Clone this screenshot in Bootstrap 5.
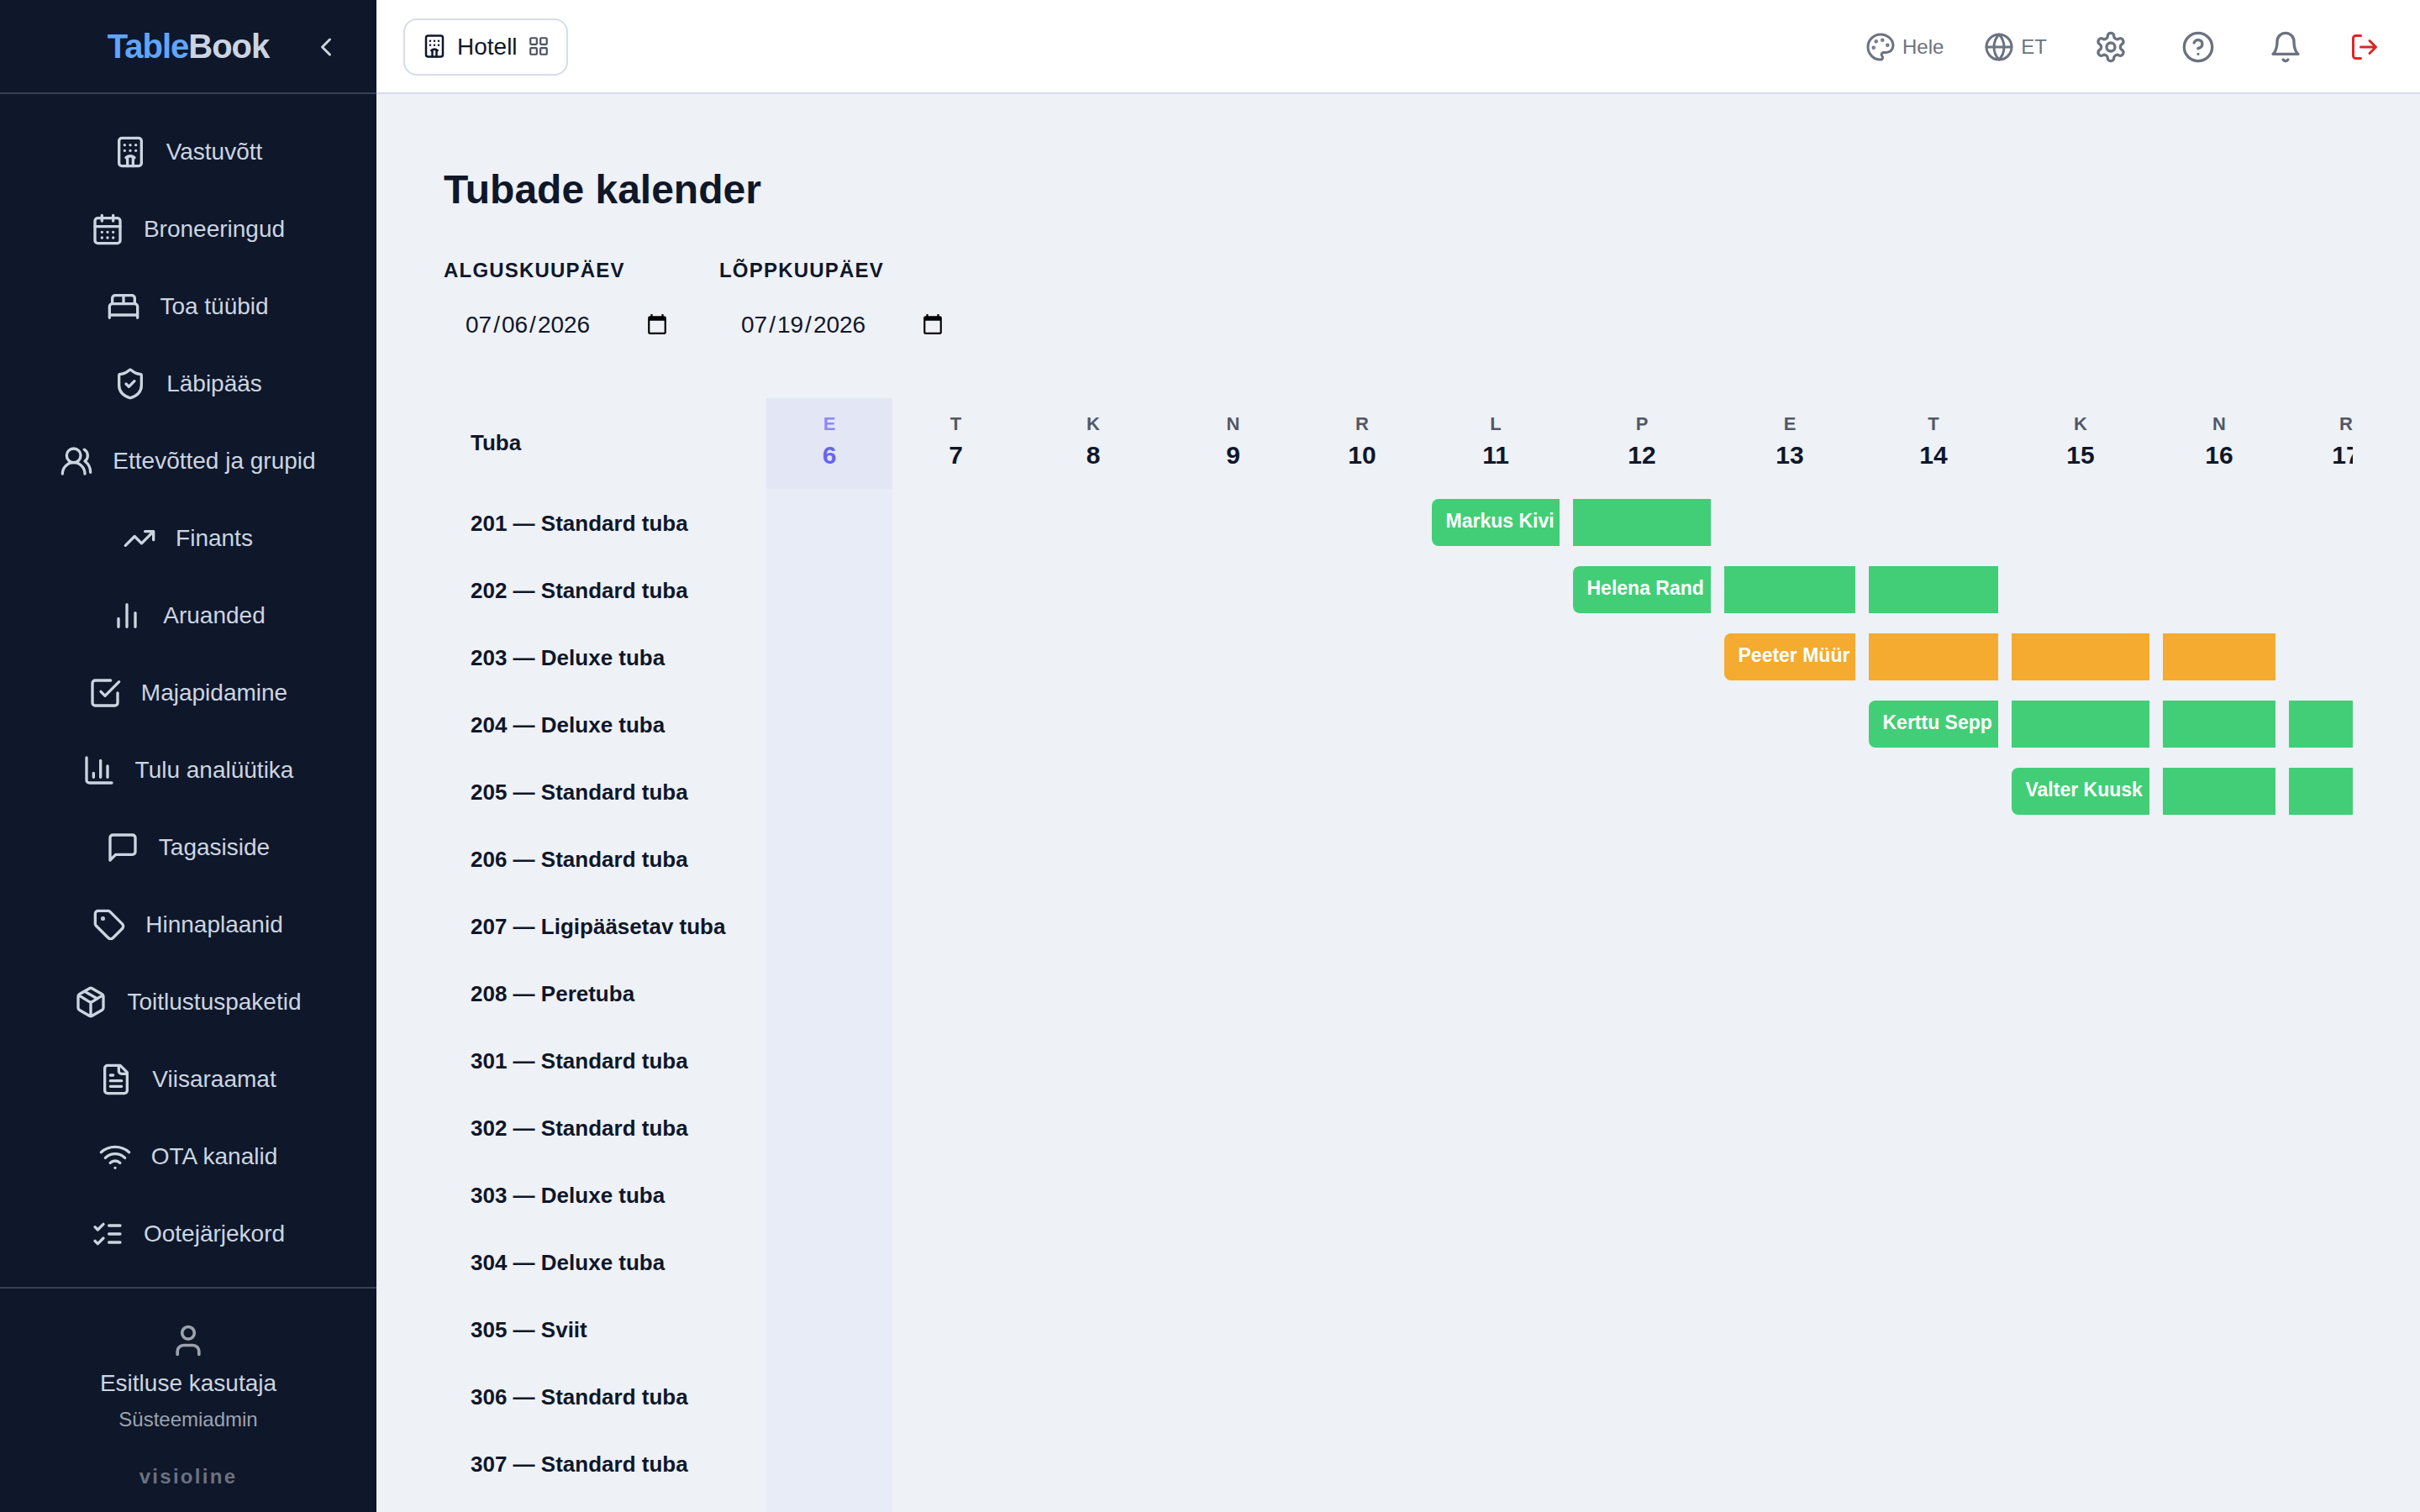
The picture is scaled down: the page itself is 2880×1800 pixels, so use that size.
<!DOCTYPE html>
<html lang="et">
<head>
<meta charset="utf-8">
<meta name="viewport" content="width=device-width, initial-scale=1">
<title>TableBook – Tubade kalender</title>
<link href="https://cdn.jsdelivr.net/npm/bootstrap@5.3.0/dist/css/bootstrap.min.css" rel="stylesheet">
<style>
  body { font-family: "Liberation Sans", Arial, sans-serif; font-size: 28px; line-height: 1.5; color: #0f172a; background: #eef1f6; }
  .app { height: 1800px; }
  .ico { fill: none; stroke: currentColor; stroke-width: 2; stroke-linecap: round; stroke-linejoin: round; flex: none; display: block; }
  .i26 { width: 26px; height: 26px; } .i30 { width: 30px; height: 30px; }
  .i36 { width: 36px; height: 36px; } .i40 { width: 40px; height: 40px; } .i44 { width: 44px; height: 44px; }
  .side { width: 448px; background: #0f172a; color: #cbd5e1; }
  .side-head { height: 112px; border-bottom: 2px solid #334155; display: grid; grid-template-columns: 1fr auto 1fr; align-items: center; }
  .brand { font-size: 40px; font-weight: 700; letter-spacing: -1px; line-height: 1; }
  .brand span { color: #60a5fa; }
  .collapse-btn { justify-self: center; padding: 2px 0 0 8px; color: inherit; }
  .side-nav { padding-top: 23px; }
  .side-nav .nav-link { height: 92px; gap: 23px; padding: 0 1px 0 0; color: #cbd5e1; }
  .side-foot { height: 268px; border-top: 2px solid #334155; padding-top: 40px; }
  .user-name { font-size: 28px; line-height: 42px; margin-top: 8px; }
  .user-role { font-size: 24px; line-height: 36px; color: #9ca3af; margin-top: 4px; }
  .maker { font-size: 24px; line-height: 36px; font-weight: 700; letter-spacing: 2.3px; color: #6b7280; margin-top: 32px; }
  .topbar { height: 112px; border-bottom: 2px solid #d6dce8; background: #fff; padding: 2px 32px 0; }
  .unit-btn { height: 68px; border: 2px solid #d6dce8; border-radius: 16px; gap: 12px; padding: 0 20px; font-size: 28px; color: #0f172a; background: #fff; }
  .unit-btn .ico { margin-bottom: 2px; }
  .tools { gap: 16px; color: #6b7280; font-size: 24px; }
  .tool { padding: 0 16px; gap: 8px; }
  .tool-lg { padding: 0 24px; }
  .page { padding: 81px 80px 0; }
  h1 { font-size: 48px; font-weight: 700; line-height: 66px; margin: 0 0 45px; }
  .fields { gap: 32px; }
  .date-field { width: 296px; }
  .date-field label { font-size: 24px; font-weight: 700; letter-spacing: 1.2px; line-height: 36px; display: block; }
  .date-field input { width: 296px; height: 76px; margin-top: 9px; border: 0; padding: 0 26px 0 24px; font-size: 28px; background: transparent; color: #0f172a; }
  .date-field input::-webkit-datetime-edit-month-field,
  .date-field input::-webkit-datetime-edit-day-field,
  .date-field input::-webkit-datetime-edit-year-field { padding: 0 2px; }
  .cal-wrap { margin-top: 49px; overflow: hidden; }
  .cal { table-layout: fixed; width: 2340px; border-collapse: collapse; }
  .cal th, .cal td { padding: 0; }
  .cal thead th { height: 108px; text-align: center; vertical-align: middle; }
  .cal .room { padding-left: 32px; text-align: left !important; font-size: 26px; font-weight: 700; white-space: nowrap; }
  .cal thead .room { padding-bottom: 2px; }
  .cal tbody tr { height: 80px; }
  .cal tbody td { padding: 12px 8px; }
  .cal tbody .room { padding-top: 14px; }
  .cal .dow { font-size: 22px; line-height: 33px; opacity: .7; display: block; margin-top: -6px; }
  .cal .num { font-size: 30px; line-height: 42px; display: block; }
  .cal thead .today { background: rgba(99,102,241,.08); color: #6366f1; }
  .cal tbody .today { background: #e8ecf6; }
  .stay { height: 56px; line-height: 52px; font-size: 23px; font-weight: 700; color: #fff; white-space: nowrap; overflow: hidden; background: #42ce76; padding-left: 16.500px; }
  .stay.first { border-radius: 8px 0 0 8px; }
  .stay.wait { background: #f4ab2f; }
</style>
</head>
<body>
<svg class="d-none">
  <symbol id="hotel" viewBox="0 0 24 24"><path d="M10 22v-6.57M12 11h.01M12 7h.01M14 15.43V22M15 16a5 5 0 0 0-6 0M16 11h.01M16 7h.01M8 11h.01M8 7h.01"/><rect x="4" y="2" width="16" height="20" rx="2"/></symbol>
  <symbol id="grid" viewBox="0 0 24 24"><rect width="7" height="7" x="3" y="3" rx="1"/><rect width="7" height="7" x="14" y="3" rx="1"/><rect width="7" height="7" x="14" y="14" rx="1"/><rect width="7" height="7" x="3" y="14" rx="1"/></symbol>
  <symbol id="cal" viewBox="0 0 24 24"><path d="M8 2v4M16 2v4M3 10h18M8 14h.01M12 14h.01M16 14h.01M8 18h.01M12 18h.01M16 18h.01"/><rect width="18" height="18" x="3" y="4" rx="2"/></symbol>
  <symbol id="bed" viewBox="0 0 24 24"><path d="M2 20v-8a2 2 0 0 1 2-2h16a2 2 0 0 1 2 2v8M4 10V6a2 2 0 0 1 2-2h12a2 2 0 0 1 2 2v4M12 4v6M2 18h20"/></symbol>
  <symbol id="shield" viewBox="0 0 24 24"><path d="M20 13c0 5-3.5 7.5-7.66 8.95a1 1 0 0 1-.67-.01C7.5 20.5 4 18 4 13V6a1 1 0 0 1 1-1c2 0 4.5-1.2 6.24-2.72a1.17 1.17 0 0 1 1.52 0C14.51 3.81 17 5 19 5a1 1 0 0 1 1 1zM9 12l2 2 4-4"/></symbol>
  <symbol id="users" viewBox="0 0 24 24"><path d="M18 21a8 8 0 0 0-16 0M22 20c0-3.37-2-6.5-4-8a5 5 0 0 0-.45-8.3"/><circle cx="10" cy="8" r="5"/></symbol>
  <symbol id="trend" viewBox="0 0 24 24"><path d="M22 7l-8.500 8.500-5-5L2 17M16 7h6v6"/></symbol>
  <symbol id="bars" viewBox="0 0 24 24"><path d="M18 20V10M12 20V4M6 20v-6"/></symbol>
  <symbol id="check" viewBox="0 0 24 24"><path d="M9 11l3 3L22 4M21 12v7a2 2 0 0 1-2 2H5a2 2 0 0 1-2-2V5a2 2 0 0 1 2-2h11"/></symbol>
  <symbol id="chart" viewBox="0 0 24 24"><path d="M3 3v16a2 2 0 0 0 2 2h16M18 17V9M13 17V5M8 17v-3"/></symbol>
  <symbol id="msg" viewBox="0 0 24 24"><path d="M21 15a2 2 0 0 1-2 2H7l-4 4V5a2 2 0 0 1 2-2h14a2 2 0 0 1 2 2z"/></symbol>
  <symbol id="tag" viewBox="0 0 24 24"><path d="M12.586 2.586A2 2 0 0 0 11.172 2H4a2 2 0 0 0-2 2v7.172a2 2 0 0 0 .586 1.414l8.704 8.704a2.426 2.426 0 0 0 3.420 0l6.580-6.580a2.426 2.426 0 0 0 0-3.420z"/><circle cx="7.500" cy="7.500" r=".5" fill="currentColor"/></symbol>
  <symbol id="pack" viewBox="0 0 24 24"><path d="M11 21.730a2 2 0 0 0 2 0l7-4A2 2 0 0 0 21 16V8a2 2 0 0 0-1-1.730l-7-4a2 2 0 0 0-2 0l-7 4A2 2 0 0 0 3 8v8a2 2 0 0 0 1 1.730zM12 22V12M3.300 7l7.703 4.734a2 2 0 0 0 1.994 0L20.700 7M7.500 4.270l9 5.150"/></symbol>
  <symbol id="file" viewBox="0 0 24 24"><path d="M15 2H6a2 2 0 0 0-2 2v16a2 2 0 0 0 2 2h12a2 2 0 0 0 2-2V7ZM14 2v4a2 2 0 0 0 2 2h4M10 9H8M16 13H8M16 17H8"/></symbol>
  <symbol id="wifi" viewBox="0 0 24 24"><path d="M12 20h.01M2 8.820a15 15 0 0 1 20 0M5 12.859a10 10 0 0 1 14 0M8.500 16.429a5 5 0 0 1 7 0"/></symbol>
  <symbol id="list" viewBox="0 0 24 24"><path d="M3 17l2 2 4-4M3 7l2 2 4-4M13 6h8M13 12h8M13 18h8"/></symbol>
  <symbol id="user" viewBox="0 0 24 24"><path d="M19 21v-2a4 4 0 0 0-4-4H9a4 4 0 0 0-4 4v2"/><circle cx="12" cy="7" r="4"/></symbol>
  <symbol id="palette" viewBox="0 0 24 24"><circle cx="13.500" cy="6.500" r=".5" fill="currentColor"/><circle cx="17.500" cy="10.500" r=".5" fill="currentColor"/><circle cx="8.500" cy="7.500" r=".5" fill="currentColor"/><circle cx="6.500" cy="12.500" r=".5" fill="currentColor"/><path d="M12 2C6.500 2 2 6.500 2 12s4.500 10 10 10c.926 0 1.648-.746 1.648-1.688 0-.437-.18-.835-.437-1.125-.29-.289-.438-.652-.438-1.125a1.640 1.640 0 0 1 1.668-1.668h1.996c3.051 0 5.555-2.503 5.555-5.554C21.965 6.012 17.461 2 12 2z"/></symbol>
  <symbol id="globe" viewBox="0 0 24 24"><circle cx="12" cy="12" r="10"/><path d="M12 2a14.500 14.500 0 0 0 0 20 14.500 14.500 0 0 0 0-20M2 12h20"/></symbol>
  <symbol id="gear" viewBox="0 0 24 24"><path d="M12.220 2h-.44a2 2 0 0 0-2 2v.18a2 2 0 0 1-1 1.730l-.43.25a2 2 0 0 1-2 0l-.15-.08a2 2 0 0 0-2.730.73l-.22.38a2 2 0 0 0 .73 2.730l.15.1a2 2 0 0 1 1 1.720v.51a2 2 0 0 1-1 1.740l-.15.09a2 2 0 0 0-.73 2.730l.22.38a2 2 0 0 0 2.730.73l.15-.08a2 2 0 0 1 2 0l.43.25a2 2 0 0 1 1 1.730V20a2 2 0 0 0 2 2h.44a2 2 0 0 0 2-2v-.18a2 2 0 0 1 1-1.730l.43-.25a2 2 0 0 1 2 0l.15.08a2 2 0 0 0 2.730-.73l.22-.39a2 2 0 0 0-.73-2.730l-.15-.08a2 2 0 0 1-1-1.740v-.5a2 2 0 0 1 1-1.740l.15-.09a2 2 0 0 0 .73-2.730l-.22-.38a2 2 0 0 0-2.730-.73l-.15.08a2 2 0 0 1-2 0l-.43-.25a2 2 0 0 1-1-1.730V4a2 2 0 0 0-2-2z"/><circle cx="12" cy="12" r="3"/></symbol>
  <symbol id="help" viewBox="0 0 24 24"><circle cx="12" cy="12" r="10"/><path d="M9.090 9a3 3 0 0 1 5.830 1c0 2-3 3-3 3M12 17h.01"/></symbol>
  <symbol id="bell" viewBox="0 0 24 24"><path d="M6 8a6 6 0 0 1 12 0c0 7 3 9 3 9H3s3-2 3-9M10.300 21a1.940 1.940 0 0 0 3.400 0"/></symbol>
  <symbol id="out" viewBox="0 0 24 24"><path d="M9 21H5a2 2 0 0 1-2-2V5a2 2 0 0 1 2-2h4M16 17l5-5-5-5M21 12H9"/></symbol>
  <symbol id="left" viewBox="0 0 24 24"><path d="M15 18l-6-6 6-6"/></symbol>
</svg>

<div class="app d-flex overflow-hidden">
  <aside class="side d-flex flex-column flex-shrink-0">
    <div class="side-head">
      <i></i>
      <div class="brand"><span>Table</span>Book</div>
      <a class="collapse-btn" href="#"><svg class="ico i36"><use href="#left"/></svg></a>
    </div>
    <nav class="side-nav nav flex-column flex-nowrap flex-grow-1" id="menu"></nav>
    <div class="side-foot d-flex flex-column align-items-center">
      <svg class="ico i44" style="color:#9ca3af"><use href="#user"/></svg>
      <div class="user-name">Esitluse kasutaja</div>
      <div class="user-role">Süsteemiadmin</div>
      <div class="maker">visioline</div>
    </div>
  </aside>

  <div class="flex-grow-1 overflow-hidden">
    <header class="topbar d-flex align-items-center justify-content-between">
      <button type="button" class="unit-btn d-flex align-items-center">
        <svg class="ico i30"><use href="#hotel"/></svg>Hotell<svg class="ico i26 opacity-75"><use href="#grid"/></svg>
      </button>
      <div class="tools d-flex align-items-center">
        <div class="tool d-flex align-items-center"><svg class="ico i36"><use href="#palette"/></svg>Hele</div>
        <div class="tool d-flex align-items-center"><svg class="ico i36"><use href="#globe"/></svg>ET</div>
        <div class="tool tool-lg"><svg class="ico i40"><use href="#gear"/></svg></div>
        <div class="tool tool-lg"><svg class="ico i40"><use href="#help"/></svg></div>
        <div class="tool tool-lg"><svg class="ico i40"><use href="#bell"/></svg></div>
        <div class="tool" style="color:#dc2626"><svg class="ico i36"><use href="#out"/></svg></div>
      </div>
    </header>
    <main class="page">
      <h1>Tubade kalender</h1>
      <div class="fields d-flex">
        <div class="date-field"><label for="from">ALGUSKUUPÄEV</label><input id="from" type="date" value="2026-07-06"></div>
        <div class="date-field"><label for="to">LÕPPKUUPÄEV</label><input id="to" type="date" value="2026-07-19"></div>
      </div>
      <div class="cal-wrap">
        <table class="cal">
          <colgroup id="cols"></colgroup>
          <thead><tr id="days"><th class="room">Tuba</th></tr></thead>
          <tbody id="rooms"></tbody>
        </table>
      </div>
    </main>
  </div>
</div>
<script src="https://cdn.jsdelivr.net/npm/bootstrap@5.3.0/dist/js/bootstrap.bundle.min.js"></script>
<script>
  const menu = [['hotel','Vastuvõtt'],['cal','Broneeringud'],['bed','Toa tüübid'],['shield','Läbipääs'],['users','Ettevõtted ja grupid'],['trend','Finants'],['bars','Aruanded'],['check','Majapidamine'],['chart','Tulu analüütika'],['msg','Tagasiside'],['tag','Hinnaplaanid'],['pack','Toitlustuspaketid'],['file','Viisaraamat'],['wifi','OTA kanalid'],['list','Ootejärjekord']];
  document.getElementById('menu').innerHTML = menu.map(([i, t]) =>
    `<a class="nav-link d-flex align-items-center justify-content-center" href="#"><svg class="ico i40"><use href="#${i}"/></svg>${t}</a>`).join('');

  // Column widths: room names first, then one per day from the 6th to the 17th.
  const widths = [384,150,151,176,157,150,168,180,172,170,180,150,152];
  document.getElementById('cols').innerHTML = widths.map(w => `<col style="width:${w}px">`).join('');
  document.getElementById('days').innerHTML += [...'ETKNRLPETKNR'].map((d, i) =>
    `<th class="${i ? '' : 'today'}"><span class="dow">${d}</span><span class="num">${i + 6}</span></th>`).join('');

  const S = 'Standard tuba', D = 'Deluxe tuba';
  const rooms = [[201,S],[202,S],[203,D],[204,D],[205,S],[206,S],[207,'Ligipääsetav tuba'],[208,'Peretuba'],[301,S],[302,S],[303,D],[304,D],[305,'Sviit'],[306,S],[307,S],['','']];
  const stays = {201:['Markus Kivi',11,12],202:['Helena Rand',12,14],203:['Peeter Müür',13,16,'wait'],204:['Kerttu Sepp',14,17],205:['Valter Kuusk',15,17]};
  document.getElementById('rooms').innerHTML = rooms.map(([n, t]) => {
    let row = `<tr><td class="room">${n ? n + ' — ' + t : ''}</td>`;
    const s = stays[n];
    for (let d = 6; d <= 17; d++) {
      const on = s && d >= s[1] && d <= s[2], first = on && d === s[1];
      row += `<td class="${d === 6 ? 'today' : ''}">${on ? `<div class="stay ${first ? 'first' : ''} ${s[3] || ''}">${first ? s[0] : ''}</div>` : ''}</td>`;
    }
    return row + '</tr>';
  }).join('');
</script>
</body>
</html>
